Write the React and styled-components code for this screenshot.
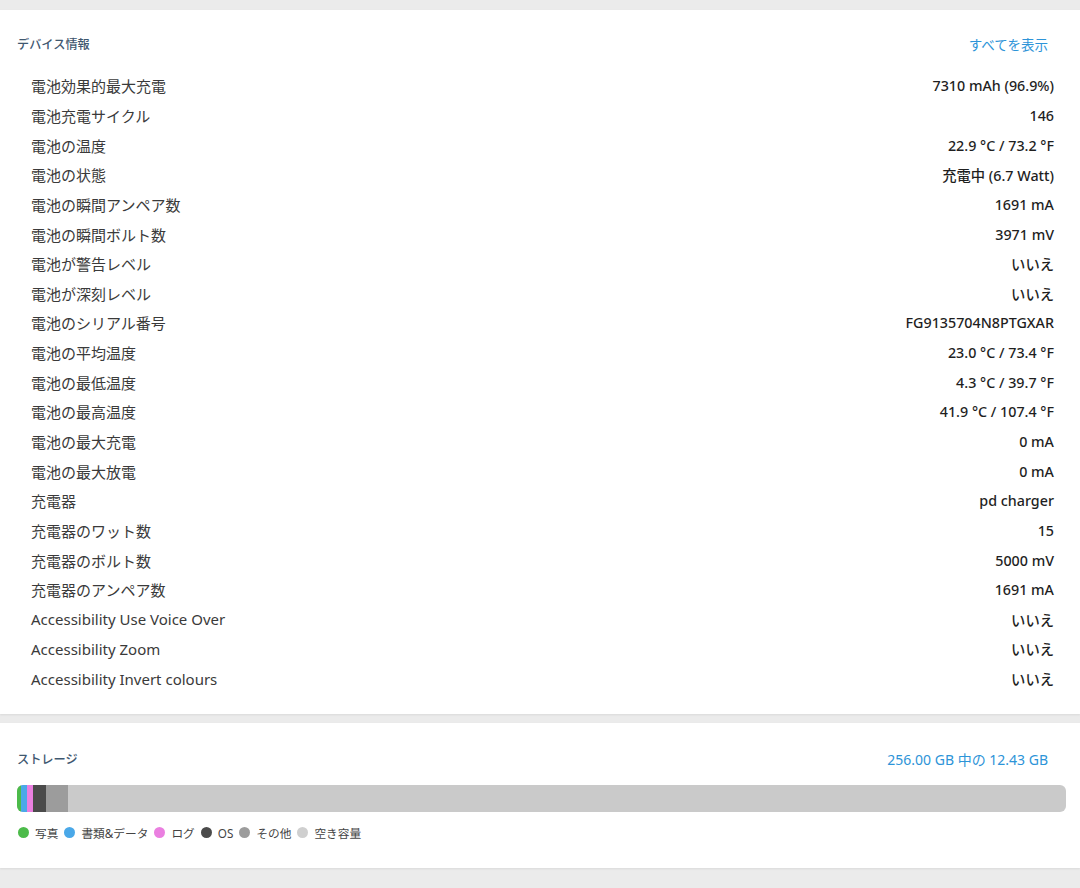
import React from "react";
import styled, { createGlobalStyle } from "styled-components";

const Global = createGlobalStyle`
  html, body { margin: 0; padding: 0; background: #ebebeb; }
  body { font-family: "Noto Sans", "Noto Sans CJK JP", sans-serif; -webkit-font-smoothing: antialiased; }
`;

const Page = styled.div`
  display: flex;
  flex-direction: column;
  gap: 9px;
  padding: 10px 0 19px;
  width: 1080px;
`;

const Card = styled.section`
  background: #fff;
  box-shadow: 0 1px 2px rgba(0,0,0,0.08);
  display: flex;
  flex-direction: column;
`;

const Header = styled.div`
  display: flex;
  justify-content: space-between;
  align-items: center;
  height: 18px;
  padding: ${p => p.$top}px ${p => p.$right}px 0 17px;
  margin-bottom: ${p => p.$gap}px;
`;

const Title = styled.h2`
  margin: 0;
  font-size: 12.2px;
  font-weight: 500;
  color: #3f5870;
  line-height: 18px;
`;

const Link = styled.span`
  font-size: ${p => p.$size || 13.5}px;
  color: #2d94d8;
  line-height: 18px;
`;

const List = styled.div`
  display: flex;
  flex-direction: column;
  padding: 0 26px 21px 31px;
`;

const Row = styled.div`
  display: flex;
  justify-content: space-between;
  align-items: center;
  height: 29.65px;
`;

const Label = styled.span`
  font-size: 15px;
  color: #3a3a3a;
`;

const Value = styled.span`
  font-size: 14.3px;
  font-weight: 500;
  color: #1f1f1f;
`;

const Bar = styled.div`
  display: flex;
  height: 27px;
  margin: 0 14px 0 17px;
  border-radius: 6px;
  overflow: hidden;
  background: #cacaca;
`;

const Seg = styled.div`
  background: ${p => p.$c};
  height: 100%;
`;

const Legend = styled.div`
  display: flex;
  align-items: center;
  gap: 6px;
  padding: 12px 0 27px 18px;
  font-size: 11.7px;
  color: #444;
`;

const Item = styled.span`
  display: flex;
  align-items: center;
  gap: 6px;
`;

const Dot = styled.span`
  width: 11px;
  height: 11px;
  border-radius: 50%;
  background: ${p => p.$c};
`;

const rows = [
  ["電池効果的最大充電", "7310 mAh (96.9%)"],
  ["電池充電サイクル", "146"],
  ["電池の温度", "22.9 °C / 73.2 °F"],
  ["電池の状態", "充電中 (6.7 Watt)"],
  ["電池の瞬間アンペア数", "1691 mA"],
  ["電池の瞬間ボルト数", "3971 mV"],
  ["電池が警告レベル", "いいえ"],
  ["電池が深刻レベル", "いいえ"],
  ["電池のシリアル番号", "FG9135704N8PTGXAR"],
  ["電池の平均温度", "23.0 °C / 73.4 °F"],
  ["電池の最低温度", "4.3 °C / 39.7 °F"],
  ["電池の最高温度", "41.9 °C / 107.4 °F"],
  ["電池の最大充電", "0 mA"],
  ["電池の最大放電", "0 mA"],
  ["充電器", "pd charger"],
  ["充電器のワット数", "15"],
  ["充電器のボルト数", "5000 mV"],
  ["充電器のアンペア数", "1691 mA"],
  ["Accessibility Use Voice Over", "いいえ"],
  ["Accessibility Zoom", "いいえ"],
  ["Accessibility Invert colours", "いいえ"],
];

const segs = [
  ["#4cbb4a", 4],
  ["#4aa8e8", 6],
  ["#ea7fe0", 6],
  ["#4b4b4b", 13],
  ["#9c9c9c", 22],
];

const legend = [
  ["#4cbb4a", "写真"],
  ["#4aa8e8", "書類&データ"],
  ["#ea7fe0", "ログ"],
  ["#4b4b4b", "OS"],
  ["#9c9c9c", "その他"],
  ["#cfcfcf", "空き容量"],
];

export default function App() {
  return (
    <>
      <Global />
      <Page>
        <Card>
          <Header $top={26} $right={32} $gap={17}>
            <Title>デバイス情報</Title>
            <Link>すべてを表示</Link>
          </Header>
          <List>
            {rows.map(([l, v]) => (
              <Row key={l}>
                <Label>{l}</Label>
                <Value>{v}</Value>
              </Row>
            ))}
          </List>
        </Card>
        <Card>
          <Header $top={28} $right={32} $gap={16}>
            <Title>ストレージ</Title>
            <Link $size={14}>256.00 GB 中の 12.43 GB</Link>
          </Header>
          <Bar>
            {segs.map(([c, w]) => (
              <Seg key={c} $c={c} style={{ width: w }} />
            ))}
          </Bar>
          <Legend>
            {legend.map(([c, t]) => (
              <Item key={t}>
                <Dot $c={c} />
                {t}
              </Item>
            ))}
          </Legend>
        </Card>
      </Page>
    </>
  );
}
